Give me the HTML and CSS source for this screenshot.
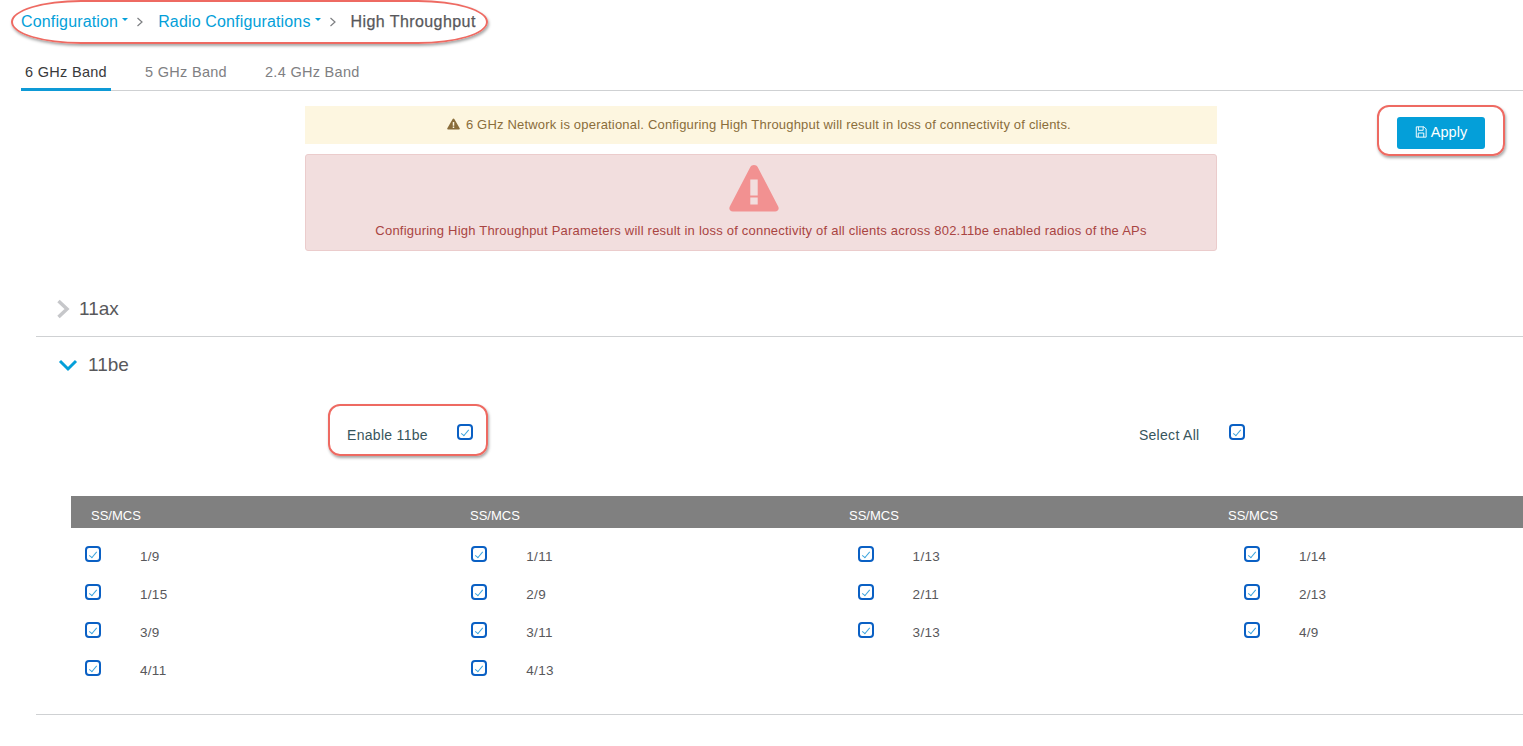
FILE: index.html
```html
<!DOCTYPE html>
<html lang="en">
<head>
    <meta charset="UTF-8">
    <title>High Throughput</title>
    <link rel="stylesheet" href="styles.css">
</head>
<body>
    <nav class="breadcrumb">
        <a class="crumb-link">Configuration</a><span class="caret"></span>
        <svg class="crumb-sep" viewBox="0 0 8 10"><path d="M1.5 1 L6 5 L1.5 9"/></svg>
        <a class="crumb-link">Radio Configurations</a><span class="caret"></span>
        <svg class="crumb-sep" viewBox="0 0 8 10"><path d="M1.5 1 L6 5 L1.5 9"/></svg>
        <span class="crumb-current">High Throughput</span>
        <span class="callout callout-crumb"></span>
    </nav>

    <div class="tabs">
        <a class="tab active">6 GHz Band</a>
        <a class="tab">5 GHz Band</a>
        <a class="tab">2.4 GHz Band</a>
    </div>

    <div class="top-row">
        <div class="alerts">
            <div class="alert-warning">
                <svg class="warn-small" viewBox="0 0 14 13"><path fill-rule="evenodd" d="M7 .5c.4 0 .7.2.9.5l5.8 10.2c.4.7 0 1.3-.8 1.3H1.100c-.8 0-1.200-.6-.8-1.300L6.100 1c.2-.3.5-.5.9-.5zM6.200 4.300v4h1.600v-4zM6.200 9.300v1.500h1.600V9.300z"/></svg>
                6 GHz Network is operational. Configuring High Throughput will result in loss of connectivity of clients.
            </div>
            <div class="alert-danger">
                <svg class="warn-big" viewBox="0 0 50 47"><path fill-rule="evenodd" d="M25 0c1.600 0 3 .8 3.800 2.200l20.400 39.300c1.300 2.600-.2 5-3.100 5H3.900c-2.900 0-4.400-2.400-3.100-5L21.200 2.200C22 .8 23.400 0 25 0zM21.300 14.500v16h7.400v-16zM21.300 32.500v7h7.400v-7z"/></svg>
                <div>Configuring High Throughput Parameters will result in loss of connectivity of all clients across 802.11be enabled radios of the APs</div>
            </div>
        </div>
        <div class="apply-wrap">
            <button class="apply-btn">
                <svg class="save-icon" viewBox="0 0 14 14"><path d="M1.500 1h9l2.500 2.500v9.500h-11.500z"/><path d="M4 1v4h5.500V1M3.800 13V8.200h6.400V13"/></svg>
                Apply
            </button>
            <span class="callout callout-apply"></span>
        </div>
    </div>

    <section class="accordion">
        <div class="acc-head acc-closed">
            <svg class="chev-right" viewBox="0 0 14 20"><path d="M2.500 2 L11 10 L2.500 18"/></svg>
            <span>11ax</span>
        </div>
        <div class="acc-open">
            <div class="acc-head acc-title">
                <svg class="chev-down" viewBox="0 0 20 14"><path d="M2 3 L10 11 L18 3"/></svg>
                <span>11be</span>
            </div>

            <div class="option-row">
                <div class="option option-enable">
                    <label>Enable 11be</label>
                    <span class="check"></span>
                    <span class="callout callout-enable"></span>
                </div>
                <div class="option option-all">
                    <label>Select All</label>
                    <span class="check"></span>
                </div>
            </div>

            <div class="mcs-head">
                <span>SS/MCS</span>
                <span>SS/MCS</span>
                <span>SS/MCS</span>
                <span>SS/MCS</span>
            </div>

            <div class="mcs-grid">
                <div class="mcs-cell"><span class="check"></span><span>1/9</span></div>
                <div class="mcs-cell"><span class="check"></span><span>1/11</span></div>
                <div class="mcs-cell"><span class="check"></span><span>1/13</span></div>
                <div class="mcs-cell"><span class="check"></span><span>1/14</span></div>
                <div class="mcs-cell"><span class="check"></span><span>1/15</span></div>
                <div class="mcs-cell"><span class="check"></span><span>2/9</span></div>
                <div class="mcs-cell"><span class="check"></span><span>2/11</span></div>
                <div class="mcs-cell"><span class="check"></span><span>2/13</span></div>
                <div class="mcs-cell"><span class="check"></span><span>3/9</span></div>
                <div class="mcs-cell"><span class="check"></span><span>3/11</span></div>
                <div class="mcs-cell"><span class="check"></span><span>3/13</span></div>
                <div class="mcs-cell"><span class="check"></span><span>4/9</span></div>
                <div class="mcs-cell"><span class="check"></span><span>4/11</span></div>
                <div class="mcs-cell"><span class="check"></span><span>4/13</span></div>
            </div>
        </div>
    </section>
</body>
</html>
```

FILE: styles.css
```css
:root {
    --link-color: #049fd9;
    --check-color: #0a60c4;
    --line-color: #cfd1d3;
    --callout-color: #ee6a62;
}

html, body {
    height: 746px;
    overflow: hidden;
}

body {
    margin: 0;
    background: #fff;
    color: #39393b;
    font-family: "Liberation Sans", Arial, sans-serif;
}

.breadcrumb {
    position: relative;
    display: flex;
    align-items: center;
    height: 44px;
    padding-left: 21px;
    font-size: 16px;
    letter-spacing: 0.15px;
}

.crumb-link {
    color: var(--link-color);
}

.caret {
    width: 0;
    height: 0;
    margin: -6px 0 0 4px;
    border-left: 3px solid transparent;
    border-right: 3px solid transparent;
    border-top: 3px solid var(--link-color);
}

.crumb-sep {
    width: 8px;
    height: 10px;
    margin: 0 14px 0 8px;
    fill: none;
    stroke: #7d7f82;
    stroke-width: 1.2;
}

.crumb-current {
    color: #58585b;
    letter-spacing: 0.42px;
    -webkit-text-stroke: 0.25px #58585b;
}

/* red rings drawn over the screenshot */
.callout {
    position: absolute;
    box-sizing: border-box;
    border: 2px solid var(--callout-color);
    box-shadow: 1px 2px 3px rgba(0,0,0,0.35);
    pointer-events: none;
}

.callout-crumb {
    left: 11px;
    top: 0;
    width: 477px;
    height: 44px;
    border-radius: 70px / 22px;
}

.tabs {
    display: flex;
    gap: 30px;
    height: 47px;
    margin-left: 21px;
    border-bottom: 1px solid var(--line-color);
    box-sizing: border-box;
}

.tab {
    padding: 20px 4px 0;
    font-size: 14.5px;
    letter-spacing: 0.3px;
    color: #7f7f83;
}

.tab.active {
    margin-bottom: -1px;
    color: #39393b;
    border-bottom: 3px solid #0e9ad6;
}

.top-row {
    display: flex;
    align-items: flex-start;
    padding: 15px 0 0 305px;
}

.alerts {
    width: 912px;
}

.alert-warning {
    height: 38px;
    padding-right: 4px;
    line-height: 38px;
    text-align: center;
    background: #fdf6e0;
    color: #8a6d3b;
    font-size: 13px;
    letter-spacing: 0.19px;
}

.warn-small {
    width: 13px;
    height: 12px;
    margin-right: 2px;
    vertical-align: -1px;
    fill: #8a6d3b;
}

.alert-danger {
    box-sizing: border-box;
    height: 97px;
    margin-top: 10px;
    padding-top: 10px;
    text-align: center;
    background: #f2dede;
    border: 1px solid #ebcccc;
    border-radius: 3px;
    color: #a94442;
    font-size: 13px;
    letter-spacing: 0.215px;
}

.warn-big {
    display: block;
    width: 50px;
    height: 47px;
    margin: 0 0 11px 423px;
    fill: #f29191;
}

.apply-wrap {
    position: relative;
    margin: 11px 0 0 180px;
}

.apply-btn {
    display: flex;
    align-items: center;
    justify-content: center;
    gap: 4px;
    width: 88px;
    height: 32px;
    padding: 0 0 2px;
    background: #049fd9;
    color: #fff;
    border: none;
    border-radius: 3px;
    font-family: inherit;
    font-size: 14.5px;
}

.save-icon {
    width: 12px;
    height: 12px;
    fill: none;
    stroke: #fff;
    stroke-width: 1.1;
}

.callout-apply {
    left: -20px;
    top: -12px;
    width: 128px;
    height: 51px;
    border-radius: 12px;
}

.accordion {
    margin: 30px 0 0 36px;
}

.acc-head {
    display: flex;
    align-items: center;
    font-size: 19px;
    color: #58585b;
}

.acc-closed {
    height: 55px;
    padding-left: 20px;
    border-bottom: 1px solid var(--line-color);
}

.chev-right {
    width: 14px;
    height: 20px;
    margin-right: 9px;
    fill: none;
    stroke: #c6c7ca;
    stroke-width: 3.5;
}

.acc-open {
    height: 377px;
    border-bottom: 1px solid var(--line-color);
}

.acc-title {
    height: 55px;
    padding-left: 22px;
}

.chev-down {
    width: 20px;
    height: 14px;
    margin-right: 10px;
    fill: none;
    stroke: #049fd9;
    stroke-width: 3;
}

.option-row {
    position: relative;
    display: flex;
    height: 104px;
    padding-top: 25px;
    box-sizing: border-box;
    font-size: 14px;
    letter-spacing: 0.3px;
    color: #37555c;
}

.option {
    position: relative;
    display: flex;
    align-items: flex-start;
    height: 40px;
}

.option label {
    padding-top: 10px;
}

.option .check {
    margin-top: 7px;
}

.option-enable {
    margin-left: 311px;
    gap: 29px;
}

.option-all {
    margin-left: 666px;
    gap: 30px;
}

.callout-enable {
    left: -19px;
    top: -13px;
    width: 160px;
    height: 52px;
    border-radius: 12px;
}

.check {
    flex: none;
    position: relative;
    display: inline-block;
    box-sizing: border-box;
    width: 16px;
    height: 16px;
    border: 2px solid var(--check-color);
    border-radius: 4px;
    background: #fff;
}

.check::after {
    content: "";
    position: absolute;
    left: 4px;
    top: 1.500px;
    width: 3px;
    height: 7px;
    border-right: 1px solid #3da5dd;
    border-bottom: 1px solid #3da5dd;
    transform: rotate(40deg);
}

.mcs-head {
    display: grid;
    grid-template-columns: repeat(3, 379px) 1fr;
    height: 32px;
    line-height: 39px;
    margin-left: 35px;
    padding-left: 20px;
    background: #808080;
    color: #fff;
    font-size: 13px;
}

.mcs-grid {
    display: grid;
    grid-template-columns: repeat(3, 386.300px) 1fr;
    grid-auto-rows: 38px;
    margin: 7px 0 0 49px;
    font-size: 13.5px;
    letter-spacing: 0.3px;
    color: #58585b;
}

.mcs-cell {
    display: flex;
    align-items: flex-start;
    gap: 39px;
    padding-top: 11px;
}

.mcs-cell .check + span {
    padding-top: 3px;
}
```
